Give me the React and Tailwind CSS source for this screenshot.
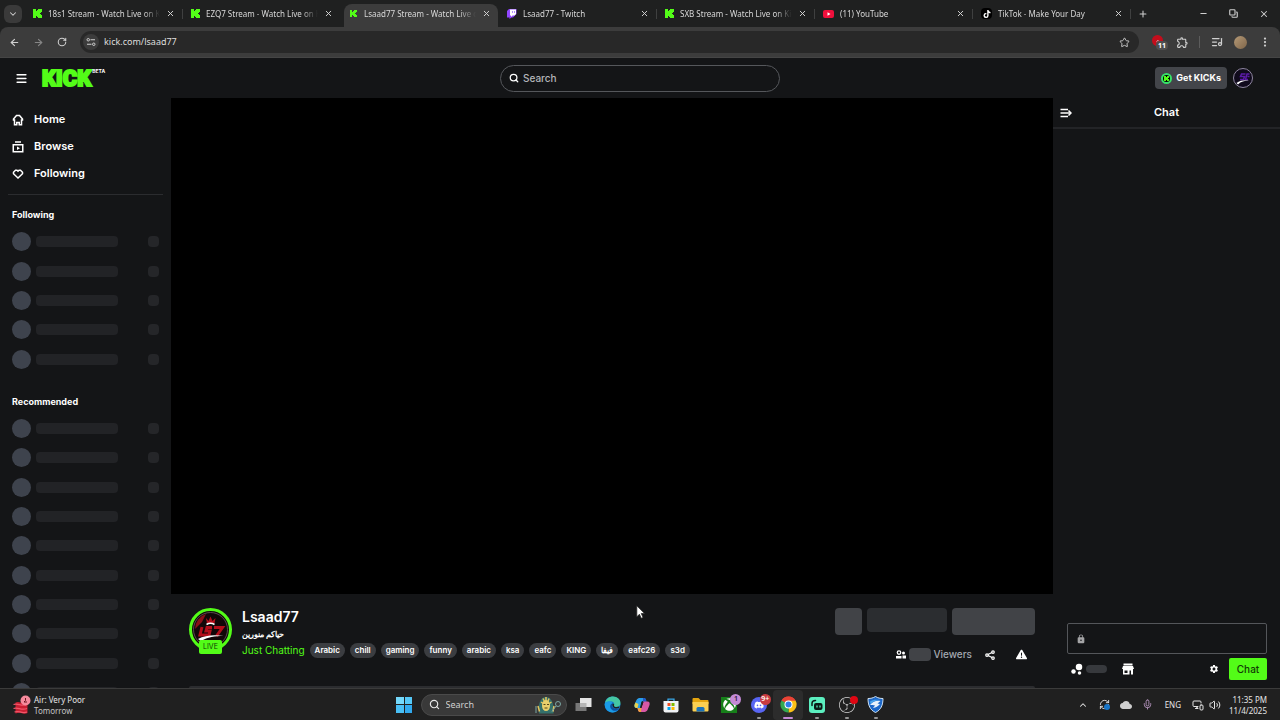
import {
  ArrowLeft,
  ArrowRight,
  ChevronDown,
  ChevronUp,
  Copy,
  EllipsisVertical,
  ListMusic,
  Menu,
  Mic,
  Minus,
  MonitorSmartphone,
  Plus,
  RefreshCw,
  RotateCw,
  Search,
  Star,
  Volume2,
  X,
} from 'lucide-react';
import { FaDiscord, FaTiktok, FaTriangleExclamation, FaXbox } from 'react-icons/fa6';
import { MdCloud, MdLock, MdOutlineExtension, MdSettings } from 'react-icons/md';
import { SiObsstudio } from 'react-icons/si';
import clsx from 'clsx';

const TABS = [
  { title: '18s1 Stream - Watch Live on Kick', icon: 'kick', divider: true },
  { title: 'EZQ7 Stream - Watch Live on Kick', icon: 'kick' },
  { title: 'Lsaad77 Stream - Watch Live on Kick', icon: 'kick', active: true },
  { title: 'Lsaad77 - Twitch', icon: 'twitch', divider: true },
  { title: 'SXB Stream - Watch Live on Kick', icon: 'kick', divider: true },
  { title: '(11) YouTube', icon: 'youtube', divider: true },
  { title: 'TikTok - Make Your Day', icon: 'tiktok', divider: true },
];

const TAGS = ['Arabic', 'chill', 'gaming', 'funny', 'arabic', 'ksa', 'eafc', 'KING', 'فيفا', 'eafc26', 's3d'];

function KickMark({ className }) {
  return (
    <svg viewBox="0 0 9 9" className={className} shapeRendering="crispEdges" aria-hidden="true">
      <path d="M0 0h3v2h1V1h1V0h4v3H8v1H7v1h1v1h1v3H5V8H4V7H3v2H0z" fill="#53fc18" />
    </svg>
  );
}

function TwitchMark({ className }) {
  return (
    <svg viewBox="0 0 20 20" className={className} aria-hidden="true">
      <path d="M4 0 0 4v13h5v3l4-3h3l7-7V0z" fill="#9146ff" />
      <path d="M6 1h12v9l-3 3h-4l-3 3v-3H6z" fill="#fff" />
      <path d="M10 4h2v4h-2zM14 4h2v4h-2z" fill="#b58aff" />
    </svg>
  );
}

function Favicon({ type, small }) {
  if (type === 'twitch') return <TwitchMark className="size-[10px] shrink-0" />;
  if (type === 'youtube') {
    return (
      <svg viewBox="0 0 22 16" className="w-[11px] shrink-0" aria-hidden="true">
        <rect width="22" height="16" rx="4" fill="#f0103c" />
        <path d="M9 4.500v7l6-3.500z" fill="#fff" />
      </svg>
    );
  }
  if (type === 'tiktok') {
    return (
      <span className="flex size-[11px] shrink-0 items-center justify-center rounded-sm bg-black text-white">
        <FaTiktok size={8} />
      </span>
    );
  }
  return <KickMark className={small ? 'mx-px size-[7px] shrink-0' : 'size-[9px] shrink-0'} />;
}

function Tab({ title, icon, active, divider }) {
  return (
    <li className="flex h-full max-w-[158px] min-w-0 flex-1 items-center">
      <div
        className={clsx(
          'ml-[3px] flex h-full min-w-0 flex-1 items-center gap-[6px] rounded-t-lg pr-[7px] pb-1 pl-[5px]',
          active && 'bg-[#3c3c3c]',
        )}
      >
        <Favicon type={icon} small={active} />
        <a
          href="#tab"
          className="min-w-0 flex-1 overflow-hidden mask-r-from-85% whitespace-nowrap text-[#d8d8d8]"
        >
          {title}
        </a>
        <button type="button" aria-label="Close tab" className="text-[#d8d8d8]">
          <X size={9} strokeWidth={2.500} />
        </button>
      </div>
      <span className={clsx('mb-1 h-[10px] w-px', divider && 'bg-[#3f4040]')} />
    </li>
  );
}

function BrowserChrome() {
  return (
    <header className="shrink-0 bg-[#1f2020] font-['Noto_Sans',sans-serif] text-[8px] text-[#d0d0d0]">
      <div className="flex h-[27px] items-center pt-1">
        <button
          type="button"
          aria-label="Search tabs"
          className="mr-[3px] mb-1 ml-1 flex size-[18px] items-center justify-center rounded-md bg-[#3a3a3a]"
        >
          <ChevronDown size={10} strokeWidth={2.500} />
        </button>
        <ul className="flex h-full flex-1">
          {TABS.map((tab) => (
            <Tab key={tab.title} {...tab} />
          ))}
          <li className="flex items-center pb-1 pl-[7px]">
            <button type="button" aria-label="New tab">
              <Plus size={10} strokeWidth={2.500} />
            </button>
          </li>
        </ul>
        <div className="flex items-center gap-[21px] pr-[11px] pb-1">
          <button type="button" aria-label="Minimize"><Minus size={9} strokeWidth={3} /></button>
          <button type="button" aria-label="Restore"><Copy size={9} strokeWidth={3} className="-scale-x-100 rotate-90" /></button>
          <button type="button" aria-label="Close"><X size={10} strokeWidth={2.500} /></button>
        </div>
      </div>
      <div className="flex h-[31px] items-center rounded-t-lg border-b border-[#454545] bg-[#3c3c3c]">
        <div className="flex w-20 items-center gap-[13px] pl-[9px]">
          <button type="button" aria-label="Back"><ArrowLeft size={11} strokeWidth={2.500} /></button>
          <button type="button" aria-label="Forward" className="text-[#868686]"><ArrowRight size={11} strokeWidth={2.500} /></button>
          <button type="button" aria-label="Reload"><RotateCw size={10} strokeWidth={2.500} /></button>
        </div>
        <div className="flex h-[22px] flex-1 items-center rounded-full bg-[#282828] pr-[9px] pl-[3px]">
          <button
            type="button"
            aria-label="Site information"
            className="flex size-4 items-center justify-center rounded-full bg-[#3c3c3c]"
          >
            <svg viewBox="0 0 20 20" className="size-[10px]" fill="none" stroke="currentColor" strokeWidth="2" aria-hidden="true">
              <circle cx="4.500" cy="5.500" r="2.500" />
              <path d="M9 5.500h9M2 14.500h9" />
              <circle cx="15.500" cy="14.500" r="2.500" />
            </svg>
          </button>
          <input
            aria-label="Address"
            defaultValue="kick.com/lsaad77"
            className="ml-[5px] min-w-0 flex-1 text-[9px] text-[#dedede] outline-none"
          />
          <button type="button" aria-label="Bookmark"><Star size={11} strokeWidth={2} /></button>
        </div>
        <div className="flex items-center pr-[9px] pl-[13px]">
          <button type="button" aria-label="Extension, 11" className="relative h-[14px] w-[14px]">
            <span className="absolute top-0 left-0 flex size-[11px] items-center justify-center rounded-full bg-[#c30d1c]">
              <ChevronUp size={6} strokeWidth={3} />
            </span>
            <span className="absolute top-[6px] left-[4px] rounded-sm bg-[#4f4f4f] px-[2px] text-[7px] leading-[9px] font-bold text-white">
              11
            </span>
          </button>
          <button type="button" aria-label="Extensions" className="ml-[10px]"><MdOutlineExtension size={13} /></button>
          <span className="ml-[10px] h-3 w-px bg-[#5c5c5c]" />
          <button type="button" aria-label="Media" className="ml-[11px]"><ListMusic size={12} strokeWidth={2.500} /></button>
          <button
            type="button"
            aria-label="Profile"
            className="ml-[11px] size-[13px] rounded-full bg-linear-to-br from-[#b59a77] to-[#80664a]"
          />
          <button type="button" aria-label="Menu" className="ml-3"><EllipsisVertical size={12} strokeWidth={2.500} /></button>
        </div>
      </div>
    </header>
  );
}

function KickHeader() {
  return (
    <header className="grid h-10 shrink-0 grid-cols-[1fr_auto_1fr] items-center bg-[#141517]">
      <div className="flex items-center pl-[15px] text-white">
        <button type="button" aria-label="Toggle sidebar"><Menu size={13} strokeWidth={3} /></button>
        <a href="#kick" className="ml-[14px] flex items-start gap-px text-[#53fc18]">
          <span className="pt-px font-[Roboto,sans-serif] text-[22px] leading-5 font-black [-webkit-text-stroke:2px_#53fc18]">
            KICK
          </span>
          <span className="text-[5px] leading-[7px] font-bold text-white">BETA</span>
        </a>
      </div>
      <label className="flex h-[27px] w-[280px] items-center gap-1 rounded-full border border-[#55575b] px-2 text-white">
        <Search size={10} strokeWidth={3} />
        <input
          type="search"
          aria-label="Search"
          placeholder="Search"
          className="min-w-0 flex-1 text-[10px] font-medium outline-none placeholder:text-[#b4b6ba]"
        />
      </label>
      <div className="flex items-center justify-end gap-[6px] pr-[27px]">
        <button
          type="button"
          className="flex h-[22px] items-center gap-1 rounded-sm bg-[#43454a] px-[6px] text-[9px] font-bold text-white"
        >
          <span className="flex size-[11px] items-center justify-center rounded-full border-2 border-[#37e36a] bg-black">
            <KickMark className="size-[5px]" />
          </span>
          Get KICKs
        </button>
        <button type="button" aria-label="Account">
          <svg viewBox="0 0 40 40" className="size-5" aria-hidden="true">
            <circle cx="20" cy="20" r="19" fill="#100a1c" stroke="#8f86a0" strokeWidth="2" />
            <path d="M25 12h-8l-2 5h8l-2 6h-7M33 12h-5l-3 11h5M29 17h4" fill="none" stroke="#5a1ba6" strokeWidth="3" />
            <path d="M7 30c7-5 16-6 25-5-9 0-16 2-22 8z" fill="#fff" />
          </svg>
        </button>
      </div>
    </header>
  );
}

function HomeIcon() {
  return (
    <svg viewBox="0 0 24 24" className="size-3" fill="none" stroke="currentColor" strokeWidth="3" aria-hidden="true">
      <path d="M9.500 21.500H5V12H3v-2l6-7h6l6 7v2h-2v9.500h-4.500V17h-5z" />
    </svg>
  );
}

function BrowseIcon() {
  return (
    <svg viewBox="0 0 24 24" className="size-3" fill="none" stroke="currentColor" strokeWidth="3" aria-hidden="true">
      <path d="M6 2h12M2.500 7.500h19v14h-19z" />
      <path d="M10 11v7l6-3.500z" fill="currentColor" stroke="none" />
    </svg>
  );
}

function HeartIcon() {
  return (
    <svg viewBox="0 0 24 24" className="size-3" fill="none" stroke="currentColor" strokeWidth="3" aria-hidden="true">
      <path d="M7 4.500h3l2 2 2-2h3l4 4v3L12 20l-9-8.500v-3z" />
    </svg>
  );
}

const NAV = [
  { label: 'Home', Icon: HomeIcon },
  { label: 'Browse', Icon: BrowseIcon },
  { label: 'Following', Icon: HeartIcon },
];

function SkeletonRow() {
  return (
    <li className="flex items-center">
      <span className="size-[19px] rounded-full bg-[#3e434d]" />
      <span className="ml-[5px] h-[11px] w-[82px] rounded-sm bg-[#222326]" />
      <span className="ml-auto size-[11px] rounded-sm bg-[#252629]" />
    </li>
  );
}

function Sidebar() {
  return (
    <aside className="w-[171px] shrink-0 overflow-hidden bg-[#141517] pt-2 text-white">
      <nav>
        {NAV.map(({ label, Icon }) => (
          <a key={label} href="#nav" className="flex h-[27px] items-center gap-[10px] pl-3 text-[11px] font-semibold">
            <Icon />
            {label}
          </a>
        ))}
      </nav>
      <hr className="mx-2 mt-[7px] border-[#2b2c2f]" />
      <h2 className="mt-[10px] pl-3 text-[9px] leading-5 font-bold">Following</h2>
      <ul className="mt-[2px] grid h-[147px] auto-rows-fr pr-3 pl-3">
        {Array.from({ length: 5 }, (_, i) => <SkeletonRow key={i} />)}
      </ul>
      <h2 className="mt-[18px] pl-3 text-[9px] leading-5 font-bold">Recommended</h2>
      <ul className="mt-[2px] grid h-[293px] auto-rows-fr pr-3 pl-3">
        {Array.from({ length: 10 }, (_, i) => <SkeletonRow key={i} />)}
      </ul>
    </aside>
  );
}

function ChannelAvatar() {
  return (
    <a href="#channel" className="relative h-[46px] w-[43px] shrink-0">
      <svg viewBox="0 0 86 86" className="size-[43px]" aria-hidden="true">
        <circle cx="43" cy="43" r="40" fill="#120709" stroke="#53fc18" strokeWidth="6" />
        <circle cx="43" cy="43" r="34" fill="none" stroke="#6f6265" strokeWidth="1.500" />
        <path d="M12 42a31 31 0 0 1 22-30l-8 16z" fill="#8a1018" />
        <path d="m34 20 5 6 4-9 4 9 6-6-2 11H36z" fill="#b30e1b" />
        <path d="M35 33c5-3 11-3 16 0" fill="none" stroke="#fff" strokeWidth="3" />
        <path d="m26 38-4 16h9M46 39H36l-2 7h8l-2 8h-9M50 39h17L55 56" fill="none" stroke="#b30e1b" strokeWidth="6" />
        <path d="M18 62c14-8 34-9 51-6-17 0-32 2-45 10z" fill="#fff" />
      </svg>
      <span className="absolute bottom-0 left-[10px] rounded-xs bg-[#53fc18] px-[4px] text-[7px] leading-[14px] text-[#123a06]">
        LIVE
      </span>
    </a>
  );
}

function ViewersIcon() {
  return (
    <svg viewBox="0 0 20 18" className="h-[9px] w-[10px]" aria-hidden="true">
      <circle cx="6" cy="5" r="3.500" fill="none" stroke="currentColor" strokeWidth="2.500" />
      <circle cx="15" cy="6" r="3" fill="currentColor" />
      <path d="M0 17v-5h11v5zM13 17v-6h7v6z" fill="currentColor" />
    </svg>
  );
}

function ShareIcon() {
  return (
    <svg viewBox="0 0 20 20" className="size-[10px]" fill="none" stroke="currentColor" strokeWidth="2.500" aria-hidden="true">
      <circle cx="4" cy="10" r="2.500" />
      <circle cx="16" cy="4" r="2.500" />
      <circle cx="16" cy="16" r="2.500" />
      <path d="m6 9 8-4M6 11l8 4" />
    </svg>
  );
}

function StreamInfo() {
  return (
    <section className="relative flex flex-1 flex-col overflow-hidden px-[18px] pt-[14px] text-white">
      <div className="flex">
        <ChannelAvatar />
        <div className="ml-[10px] min-w-0">
          <h1 className="text-[14px] leading-[18px] font-semibold">Lsaad77</h1>
          <p className="text-[8px] leading-4 font-bold">
            <bdi>حياكم منورين</bdi>
          </p>
          <div className="flex items-center gap-[5px]">
            <a href="#category" className="text-[10px] leading-4 whitespace-nowrap text-[#53fc18]">
              Just Chatting
            </a>
            {TAGS.map((tag) => (
              <a
                key={tag}
                href="#tag"
                className="h-[15px] rounded-full bg-[#3b3d41] px-[5px] text-[8px] leading-[15px] font-semibold whitespace-nowrap"
              >
                {tag}
              </a>
            ))}
          </div>
        </div>
        <div className="ml-auto flex flex-col">
          <div className="flex gap-[5px]">
            <span className="h-[27px] w-[27px] rounded-sm bg-[#414347]" />
            <span className="h-6 w-20 rounded-sm bg-[#2b2d30]" />
            <span className="h-[27px] w-[83px] rounded-sm bg-[#414347]" />
          </div>
          <div className="mt-3 flex items-center justify-end pr-2 text-[10px]">
            <ViewersIcon />
            <span className="ml-[3px] h-[13px] w-[22px] rounded-sm bg-[#414347]" />
            <span className="ml-[2px] font-medium text-[#a3a8b0]">Viewers</span>
            <button type="button" aria-label="Share" className="ml-[13px]"><ShareIcon /></button>
            <button type="button" aria-label="Report" className="ml-[21px]"><FaTriangleExclamation size={11} /></button>
          </div>
        </div>
      </div>
      <div className="mt-auto h-[2px] rounded-t-sm bg-[#2b2c2f]" />
      <svg viewBox="0 0 12 19" className="absolute top-[11px] left-[465px] h-[14px] w-[9px]" aria-hidden="true">
        <path d="M1 1v15l3.500-3.500L7 18l2.500-1-2.500-5.500h4.500z" fill="#fff" stroke="#222" />
      </svg>
    </section>
  );
}

function ShopIcon() {
  return (
    <svg viewBox="0 0 24 24" className="size-3" fill="currentColor" aria-hidden="true">
      <path d="M3 1h18v4H3zM2 6h20l2 6H0z" />
      <path fillRule="evenodd" d="M2 12h20v11h-4v-8h-3v8H2zm3 3v5h6v-5z" />
    </svg>
  );
}

function Chat() {
  return (
    <aside className="flex w-[227px] shrink-0 flex-col bg-[#141517] text-white">
      <div className="flex h-[31px] items-center border-b-2 border-[#232427] pl-[7px]">
        <button type="button" aria-label="Collapse chat">
          <svg viewBox="0 0 24 20" className="h-[10px] w-3" fill="none" stroke="currentColor" strokeWidth="3" aria-hidden="true">
            <path d="M1 3h15M1 10h20M1 17h15" />
            <path d="m17 5 5 5-5 5" />
          </svg>
        </button>
        <h2 className="flex-1 pr-[19px] text-center text-[11px] font-semibold">Chat</h2>
      </div>
      <div className="flex-1" />
      <form className="pr-[13px] pb-2 pl-[14px]">
        <label className="flex h-[31px] items-center gap-1 rounded-xs border border-[#54565a] pl-[8px] text-[#a4a4a6]">
          <MdLock size={10} />
          <input aria-label="Message" className="min-w-0 flex-1 text-[10px] outline-none" />
        </label>
        <div className="mt-[4px] flex items-center pl-1">
          <svg viewBox="0 0 24 24" className="size-3" fill="currentColor" aria-hidden="true">
            <circle cx="16" cy="8" r="6.500" />
            <circle cx="5" cy="17" r="4.500" />
            <circle cx="17" cy="20" r="3.500" />
          </svg>
          <span className="ml-[3px] h-2 w-[21px] rounded-full bg-[#37393d]" />
          <button type="button" aria-label="Shop" className="ml-[15px]"><ShopIcon /></button>
          <button type="button" aria-label="Chat settings" className="ml-auto"><MdSettings size={10} /></button>
          <button
            type="button"
            className="ml-[10px] h-[22px] w-[38px] rounded-xs bg-[#53fc18] text-[10px] font-medium text-[#123a06]"
          >
            Chat
          </button>
        </div>
      </form>
    </aside>
  );
}

function EdgeIcon() {
  return (
    <svg viewBox="0 0 34 34" className="size-[17px]" aria-hidden="true">
      <circle cx="17" cy="17" r="16" fill="#1479cc" />
      <path d="M2 14C4 5 11 1 18 1c9 0 15 6 15 13 0 5-4 8-9 8-4 0-5-2-4-4 2-5-3-8-8-7-5 0-8 2-10 3z" fill="#45c7a3" />
      <path d="M2 14c5-5 14-4 15 1-5 1-6 8-2 12 4 5 11 3 14 1-7 7-18 6-23 0-4-4-5-9-4-14z" fill="#1a9be6" />
      <path d="M17 15c-3 6 2 11 8 11 3 0 5-1 6-2-4 6-12 7-16 2-4-4-3-10 2-11z" fill="#0d4f9e" />
      <path d="M17 15c3 0 4 2 3 4 0 2 2 3 5 3l6-1-1 3c-7 3-15-1-13-9z" fill="#202020" />
    </svg>
  );
}

function CopilotIcon() {
  return (
    <svg viewBox="0 0 32 32" className="size-4" strokeLinejoin="round" aria-hidden="true">
      <path d="M12 2h8c2 0 3 1 4 4l1 3h-7L13 22H5c-4 0-5-3-4-7L5 6c2-3 4-4 7-4z" fill="#2b9de8" />
      <path d="M18 2h2c2 0 3 1 4 4l1 3h-7z" fill="#2158c8" />
      <path d="M20 30h-8c-2 0-3-1-4-4l-1-4h7l5-13h8c4 0 5 3 4 7l-4 10c-2 3-4 4-7 4z" fill="#d858a5" />
      <path d="M14 30h-2c-2 0-3-1-4-4l-1-4h8z" fill="#f0a03d" />
      <path d="M1 17c0-2 1-4 2-6l6 3-2 8H5c-3 0-4-2-4-5z" fill="#e9d24a" />
      <path d="m18 10-4 12-1-1 3-12z" fill="#202020" stroke="#202020" strokeWidth="2" />
    </svg>
  );
}

function StoreIcon() {
  return (
    <svg viewBox="0 0 32 32" className="size-4" aria-hidden="true">
      <path d="M10 9V4h12v5" fill="none" stroke="#38a8e8" strokeWidth="2.500" />
      <path d="M1 8h30v19a4 4 0 0 1-4 4H5a4 4 0 0 1-4-4z" fill="#f0f2f4" />
      <path d="M9 12h6v6H9z" fill="#f25022" />
      <path d="M17 12h6v6h-6z" fill="#7fba00" />
      <path d="M9 20h6v6H9z" fill="#00a4ef" />
      <path d="M17 20h6v6h-6z" fill="#ffb900" />
    </svg>
  );
}

function FolderIcon() {
  return (
    <svg viewBox="0 0 34 32" className="h-4 w-[17px]" aria-hidden="true">
      <path d="M1 4a2 2 0 0 1 2-2h10l4 4h14a2 2 0 0 1 2 2v6H1z" fill="#e5a50f" />
      <path d="M1 10h32v17a2 2 0 0 1-2 2H3a2 2 0 0 1-2-2z" fill="#fbd052" />
      <path d="M9 29v-6a3 3 0 0 1 3-3h10a3 3 0 0 1 3 3v6z" fill="#1b73ba" />
    </svg>
  );
}

function ChromeIcon() {
  return (
    <svg viewBox="0 0 34 34" className="size-[17px]" aria-hidden="true">
      <path d="M17 17 3.100 9A16 16 0 0 1 30.900 9z" fill="#e94335" />
      <path d="M17 17 30.900 9A16 16 0 0 1 17 33z" fill="#fbc116" />
      <path d="M17 17v16A16 16 0 0 1 3.100 9z" fill="#33a852" />
      <path d="M17 9h13.900l-7 12z" fill="#fbc116" />
      <path d="M3.100 9 10 21l7-12z" fill="#33a852" />
      <path d="M3.100 9A16 16 0 0 1 30.900 9H17a8 8 0 0 0-7 4z" fill="#e94335" />
      <circle cx="17" cy="17" r="8" fill="#fff" />
      <circle cx="17" cy="17" r="6" fill="#2f7de9" />
    </svg>
  );
}

function StreamlabsIcon() {
  return (
    <svg viewBox="0 0 32 32" className="size-4" aria-hidden="true">
      <rect width="32" height="32" rx="6" fill="#5cf0c0" />
      <path d="M6 17v-4c0-4 3-6 7-6" fill="none" stroke="#0b1b17" strokeWidth="3" strokeLinecap="round" />
      <rect x="10" y="12" width="17" height="14" rx="4" fill="#0b1b17" />
      <path d="M16 17v4M22 17v4" stroke="#5cf0c0" strokeWidth="2.500" />
    </svg>
  );
}

function ShieldIcon() {
  return (
    <svg viewBox="0 0 34 34" className="size-[17px]" aria-hidden="true">
      <path d="M17 1c5 3 9 4 15 4 0 13-4 23-15 28C6 28 2 18 2 5c6 0 10-1 15-4z" fill="#1c68c9" stroke="#cfe1f2" strokeWidth="2" />
      <path d="M6 18c6-8 13-9 21-8l-6 5 5 1c-4 5-8 7-14 8l4-5c-3-1-6-1-10-1z" fill="#e8f2fb" />
      <path d="M6 11c6-4 12-4 19-3-8 1-14 3-18 8z" fill="#49a7ee" />
    </svg>
  );
}

function Badge({ className, children }) {
  return (
    <span
      className={clsx(
        'absolute -top-[3px] -right-[4px] flex size-[11px] items-center justify-center rounded-full text-[7px] font-semibold',
        className,
      )}
    >
      {children}
    </span>
  );
}

const APPS = [
  {
    name: 'Task view',
    icon: (
      <svg viewBox="0 0 34 30" className="h-[15px] w-[17px]" aria-hidden="true">
        <path d="M1 12h22v16H1z" fill="#777" />
        <path d="M10 2h23v18H10z" fill="#e4e4e4" />
        <path d="M10 12h13v8H10z" fill="#b5b5b5" />
      </svg>
    ),
  },
  { name: 'Edge', icon: <EdgeIcon /> },
  { name: 'Copilot', icon: <CopilotIcon /> },
  { name: 'Microsoft Store', icon: <StoreIcon /> },
  { name: 'File Explorer', icon: <FolderIcon /> },
  {
    name: 'Xbox',
    icon: (
      <span className="flex size-4 items-center justify-center bg-[#168019] text-white">
        <FaXbox size={13} />
      </span>
    ),
    badge: <Badge className="bg-[#c58ad6] text-[#2b1533]">1</Badge>,
  },
  {
    name: 'Discord',
    icon: (
      <span className="flex size-4 items-center justify-center rounded-full bg-[#5865f2] text-white">
        <FaDiscord size={10} />
      </span>
    ),
    badge: <Badge className="bg-[#c93b40] text-white">9+</Badge>,
    running: true,
  },
  { name: 'Chrome', icon: <ChromeIcon />, running: true, focused: true },
  { name: 'Streamlabs', icon: <StreamlabsIcon />, running: true },
  {
    name: 'OBS Studio',
    icon: <SiObsstudio size={16} color="#d4d4d4" />,
    badge: <span className="absolute -top-px -right-[3px] size-2 rounded-full bg-[#e00612]" />,
    running: true,
  },
  { name: 'Shield', icon: <ShieldIcon />, running: true },
];

function Taskbar() {
  return (
    <footer className="grid h-8 shrink-0 grid-cols-[1fr_auto_1fr] items-center border-t border-[#3b3b3b] bg-[#202020] font-['Noto_Sans',sans-serif] text-[8px] text-[#e6e6e6]">
      <button type="button" className="flex items-center gap-[3px] pl-[13px] text-left">
        <svg viewBox="0 0 36 40" className="h-5 w-[18px]" aria-hidden="true">
          <path d="M5 15c7-4 14 4 24-1v22c-8 4-14-3-24 1z" fill="#c91f32" />
          <path d="M1 19c9-4 15 5 27 0M1 27c9-4 15 5 27 0M3 34c9-4 13 4 25 0" fill="none" stroke="#f0576a" strokeWidth="2.500" />
          <circle cx="25" cy="11" r="10" fill="#f58a9c" />
          <path d="M25 6v5l-3 3h6" fill="none" stroke="#6d1420" strokeWidth="2" />
        </svg>
        <span className="leading-[11px]">
          Air: Very Poor
          <br />
          <span className="text-[#c4c4c4]">Tomorrow</span>
        </span>
      </button>
      <div className="flex items-center gap-[2px]">
        <button type="button" aria-label="Start" className="flex w-[29px] justify-center">
          <span className="grid size-4 grid-cols-2 gap-px">
            <span className="bg-[#74d8fa]" />
            <span className="bg-[#55c8f7]" />
            <span className="bg-[#49bff5]" />
            <span className="bg-[#31a9ee]" />
          </span>
        </button>
        <label className="flex h-[22px] w-[146px] items-center gap-[6px] rounded-full border border-[#4a4a4a] bg-[#393939] pr-1 pl-[7px]">
          <Search size={11} strokeWidth={2.500} />
          <input
            type="search"
            aria-label="Search Windows"
            placeholder="Search"
            className="min-w-0 flex-1 text-[9px] outline-none placeholder:text-[#cfcfcf]"
          />
          <svg viewBox="0 0 54 36" className="h-[18px] w-[27px]" aria-hidden="true">
            <path d="M8 35C5 14 12 2 22 2s17 12 15 33z" fill="#34706b" />
            <path d="M9 31 6 20M12 12l6 4M16 5l4 8M22 2v9M28 5l-3 8M33 12l-6 4M36 31l2-11" stroke="#e6c55c" strokeWidth="3" />
            <ellipse cx="22" cy="19" rx="8" ry="11" fill="#e9cf6b" />
            <path d="M17 17h4M24 17h4M19 24h6" stroke="#574718" strokeWidth="2" />
            <circle cx="46" cy="16" r="5" fill="none" stroke="#7ba7a4" strokeWidth="2" />
            <path d="m42 20-8 11M2 20v14" stroke="#7ba7a4" strokeWidth="2" />
          </svg>
        </label>
        <ul className="grid w-[322px] grid-cols-11">
          {APPS.map(({ name, icon, badge, running, focused }) => (
            <li key={name}>
              <button
                type="button"
                aria-label={name}
                className={clsx(
                  'relative flex h-[30px] w-full items-center justify-center rounded-sm',
                  focused && 'bg-[#2c2c2c]',
                )}
              >
                <span className="relative">
                  {icon}
                  {badge}
                </span>
                {running && (
                  <span
                    className={clsx(
                      'absolute bottom-px h-[2px] rounded-full',
                      focused ? 'w-[10px] bg-[#c58ad6]' : 'w-1 bg-[#979797]',
                    )}
                  />
                )}
              </button>
            </li>
          ))}
        </ul>
      </div>
      <div className="flex items-center justify-end pr-[13px]">
        <button type="button" aria-label="Show hidden icons"><ChevronUp size={10} strokeWidth={2.500} /></button>
        <span className="relative ml-[11px]">
          <RefreshCw size={11} strokeWidth={2} />
          <span className="absolute right-0 bottom-0 size-[6px] rounded-full bg-[#1876c9]" />
        </span>
        <MdCloud size={12} color="#cfcfcf" className="ml-[10px]" />
        <Mic size={11} className="ml-[10px] text-[#b795c0]" />
        <span className="ml-3">ENG</span>
        <MonitorSmartphone size={12} className="ml-[11px]" />
        <Volume2 size={12} className="ml-[5px]" />
        <time className="ml-[8px] text-right leading-[11px]">
          11:35 PM
          <br />
          11/4/2025
        </time>
      </div>
    </footer>
  );
}

export default function App() {
  return (
    <div className="flex h-screen flex-col overflow-hidden bg-[#141517] font-[Inter,'Noto_Sans',sans-serif]">
      <BrowserChrome />
      <KickHeader />
      <div className="flex min-h-0 flex-1">
        <Sidebar />
        <main className="flex min-w-0 flex-1 flex-col overflow-hidden">
          <div className="aspect-video w-full shrink-0 bg-black" />
          <StreamInfo />
        </main>
        <Chat />
      </div>
      <Taskbar />
    </div>
  );
}
